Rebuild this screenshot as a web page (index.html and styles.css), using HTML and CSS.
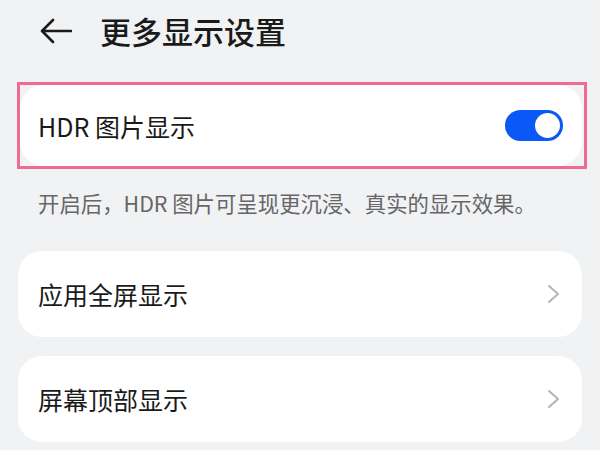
FILE: index.html
```html
<!DOCTYPE html>
<html lang="zh-CN">
<head>
<meta charset="utf-8">
<link rel="stylesheet" href="styles.css">
</head>
<body>
<div class="page">
  <div class="header">
    <svg class="back" width="32" height="26" viewBox="0 0 32 26">
      <path d="M13 2 L2 13 L13 24 M2 13 H31" fill="none" stroke="#1a1a1a" stroke-width="2.6" stroke-linecap="round" stroke-linejoin="round"/>
    </svg>
    <div class="title">更多显示设置</div>
  </div>
  <div class="hl">
    <div class="card card-hdr">
      <div class="label">HDR 图片显示</div>
      <div class="toggle"><div class="knob"></div></div>
    </div>
  </div>
  <div class="desc">开启后，HDR 图片可呈现更沉浸、真实的显示效果。</div>
  <div class="card card-item">
    <div class="label">应用全屏显示</div>
    <svg class="chev" width="14" height="20" viewBox="0 0 14 20"><path d="M2 2 L11 10 L2 18" fill="none" stroke="#b4b4b4" stroke-width="2" stroke-linecap="round" stroke-linejoin="round"/></svg>
  </div>
  <div class="card card-item gap">
    <div class="label">屏幕顶部显示</div>
    <svg class="chev" width="14" height="20" viewBox="0 0 14 20"><path d="M2 2 L11 10 L2 18" fill="none" stroke="#b4b4b4" stroke-width="2" stroke-linecap="round" stroke-linejoin="round"/></svg>
  </div>
</div>
</body>
</html>
```
FILE: styles.css
```css
html, body {
  margin: 0;
  padding: 0;
  background: #f1f2f4;
}
body {
  font-family: "Noto Sans CJK SC", "Noto Sans", sans-serif;
  color: #1a1a1a;
  width: 600px;
  height: 450px;
  overflow: hidden;
}
.header {
  display: flex;
  align-items: center;
  height: 62px;
  padding-left: 40px;
  gap: 28px;
}
.title {
  font-size: 31px;
  font-weight: 500;
  line-height: 40px;
}
.hl {
  margin: 20px 13px 0 17px;
  border: 3px solid #f06b8f;
  padding-right: 2px;
}
.card {
  background: #ffffff;
  border-radius: 24px;
  display: flex;
  align-items: center;
  justify-content: space-between;
}
.card-hdr {
  height: 81px;
  padding: 0 19px 0 18px;
}
.label {
  font-size: 25px;
  line-height: 32px;
}
.toggle {
  width: 58px;
  height: 31px;
  border-radius: 16px;
  background: #0a59f7;
  display: flex;
  align-items: center;
  justify-content: flex-end;
  padding: 0 3px;
  box-sizing: border-box;
}
.knob {
  width: 25px;
  height: 25px;
  border-radius: 50%;
  background: #ffffff;
}
.desc {
  font-size: 21.4px;
  line-height: 30px;
  color: #666666;
  margin: 19px 0 0 38px;
  white-space: nowrap;
}
.card-item {
  margin: 33px 18px 0 18px;
  height: 86px;
  padding: 0 21px 0 20px;
}
.card-item.gap {
  margin-top: 19px;
}
.chev {
  display: block;
}
```
